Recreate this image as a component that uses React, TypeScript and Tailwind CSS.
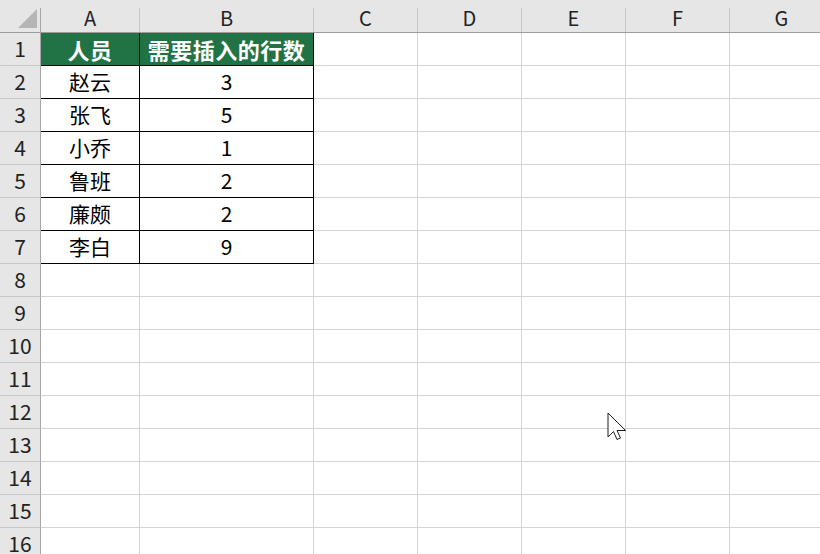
const COLS = [
  { key: 'A', w: 'w-[99px]' },
  { key: 'B', w: 'w-[174px]' },
  { key: 'C', w: 'w-[104px]' },
  { key: 'D', w: 'w-[104px]' },
  { key: 'E', w: 'w-[104px]' },
  { key: 'F', w: 'w-[104px]' },
  { key: 'G', w: 'w-[104px]' },
];

const DATA: [string, string][] = [
  ['赵云', '3'],
  ['张飞', '5'],
  ['小乔', '1'],
  ['鲁班', '2'],
  ['廉颇', '2'],
  ['李白', '9'],
];

const FONT = "font-['Noto_Sans_CJK_SC','Noto_Sans',sans-serif]";

function RowHeader({ n }: { n: number }) {
  return (
    <div className="w-[41px] h-[33px] shrink-0 flex items-center justify-center bg-[#e6e6e6] border-r border-b border-r-[#a6a6a6] border-b-[#c8c8c8] text-[21px] text-[#222]">
      {n}
    </div>
  );
}

function Cell({ w, children, kind }: { w: string; children?: React.ReactNode; kind: 'plain' | 'table' | 'head' }) {
  if (kind === 'head') {
    return (
      <div className={`${w} h-[33px] shrink-0 flex items-center justify-center bg-[#217346] border-r border-b border-black text-white font-bold text-[22px] tracking-[0.5px]`}>
        {children}
      </div>
    );
  }
  if (kind === 'table') {
    return (
      <div className={`${w} h-[33px] shrink-0 flex items-center justify-center bg-white border-r border-b border-black text-black text-[21px]`}>
        {children}
      </div>
    );
  }
  return <div className={`${w} h-[33px] shrink-0 bg-white border-r border-b border-[#d4d4d4]`} />;
}

export default function App() {
  const rows = Array.from({ length: 16 }, (_, i) => i + 1);
  return (
    <div className={`relative w-[820px] h-[554px] overflow-hidden bg-white ${FONT}`}>
      {/* column header strip */}
      <div className="flex h-[33px] bg-[#e6e6e6] border-b border-[#9c9c9c]">
        <div className="w-[41px] shrink-0 flex">
          <div className="flex-1 flex items-end justify-end pb-[4px] pr-[3px]">
            <svg width="19" height="19" viewBox="0 0 19 19">
              <polygon points="0,19 19,19 19,0" fill="#b5b5b5" />
            </svg>
          </div>
          <div className="w-px mt-2 bg-[#a6a6a6]" />
        </div>
        {COLS.map(c => (
          <div key={c.key} className={`${c.w} shrink-0 flex`}>
            <div className="flex-1 flex items-center justify-center text-[20px] text-[#222] pt-[3px]">{c.key}</div>
            <div className="w-px mt-2 bg-[#c6c6c6]" />
          </div>
        ))}
      </div>

      {rows.map(n => (
        <div key={n} className="flex">
          <RowHeader n={n} />
          {COLS.map((c, ci) => {
            if (n === 1 && ci < 2) {
              return (
                <Cell key={c.key} w={c.w} kind="head">
                  {ci === 0 ? '人员' : '需要插入的行数'}
                </Cell>
              );
            }
            if (n >= 2 && n <= 7 && ci < 2) {
              return (
                <Cell key={c.key} w={c.w} kind="table">
                  {DATA[n - 2][ci]}
                </Cell>
              );
            }
            return <Cell key={c.key} w={c.w} kind="plain" />;
          })}
        </div>
      ))}

      {/* mouse pointer */}
      <svg className="absolute left-[607px] top-[412px]" width="22" height="30" viewBox="0 0 22 30">
        <path
          d="M1 1 L1 25 L6.5 19.5 L10 27.5 L13.5 26 L10 18.5 L18.5 18.5 Z"
          fill="#ffffff"
          stroke="#1d1d1d"
          strokeWidth="1"
          strokeLinejoin="miter"
        />
      </svg>
    </div>
  );
}
